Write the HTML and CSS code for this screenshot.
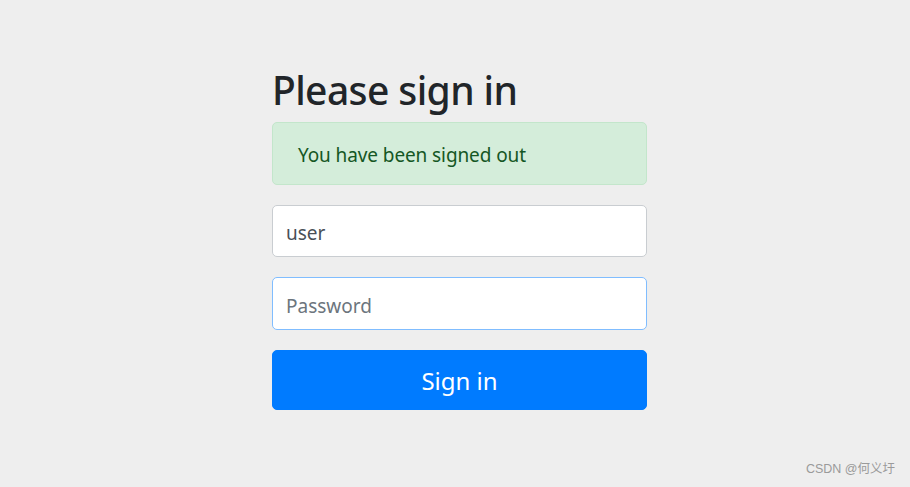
FILE: index.html
```html
<!DOCTYPE html>
<html>
<head>
<meta charset="utf-8">
<link rel="stylesheet" href="styles.css">
</head>
<body>
<div class="page">
  <form class="form-signin">
    <h2 class="heading">Please sign in</h2>
    <div class="alert">You have been signed out</div>
    <div class="field"><input class="control" type="text" value="user"></div>
    <div class="field"><input class="control focus" type="password" placeholder="Password"></div>
    <button class="btn" type="button">Sign in</button>
  </form>
  <div class="watermark">CSDN @何义圩</div>
</div>
</body>
</html>
```
FILE: styles.css
```css
html, body {
  margin: 0;
  padding: 0;
  background: #eeeeee;
}
body {
  font-family: "Noto Sans", "Open Sans", sans-serif;
  color: #212529;
  width: 910px;
  height: 487px;
  overflow: hidden;
}
.page {
  position: relative;
  height: 487px;
}
.form-signin {
  width: 375px;
  margin-left: 272px;
  padding-top: 64px;
  display: flex;
  flex-direction: column;
}
.heading {
  margin: 0 0 6px 0;
  font-size: 39px;
  font-weight: 500;
  line-height: 52px;
  letter-spacing: -0.6px;
}
.alert {
  box-sizing: border-box;
  height: 63px;
  padding: 3px 25px 0;
  display: flex;
  align-items: center;
  background: #d4edda;
  border: 1px solid #c3e6cb;
  border-radius: 5px;
  color: #155724;
  font-size: 19px;
  letter-spacing: -0.1px;
  margin-bottom: 20px;
}
.field {
  margin-bottom: 20px;
}
.control {
  box-sizing: border-box;
  display: block;
  width: 375px;
  height: 52px;
  padding: 4px 13px 0;
  border: 1px solid #c9cdd1;
  border-radius: 5px;
  background: #fff;
  font-family: "Noto Sans", "Open Sans", sans-serif;
  font-size: 19px;
  color: #495057;
  outline: none;
}
.control.focus {
  height: 53px;
  border-color: #80bdff;
}
.control::placeholder {
  color: #6c757d;
  opacity: 1;
}
.btn {
  box-sizing: border-box;
  width: 375px;
  height: 60px;
  border: 1px solid #007bff;
  border-radius: 5px;
  background: #007bff;
  color: #fff;
  font-family: "Noto Sans", "Open Sans", sans-serif;
  font-size: 24px;
  padding-top: 2px;
  cursor: pointer;
}
.watermark {
  position: absolute;
  right: 15px;
  bottom: 10px;
  font-family: "Liberation Sans", "Noto Sans CJK SC", sans-serif;
  font-size: 12.5px;
  color: #9a9a9a;
}
```
